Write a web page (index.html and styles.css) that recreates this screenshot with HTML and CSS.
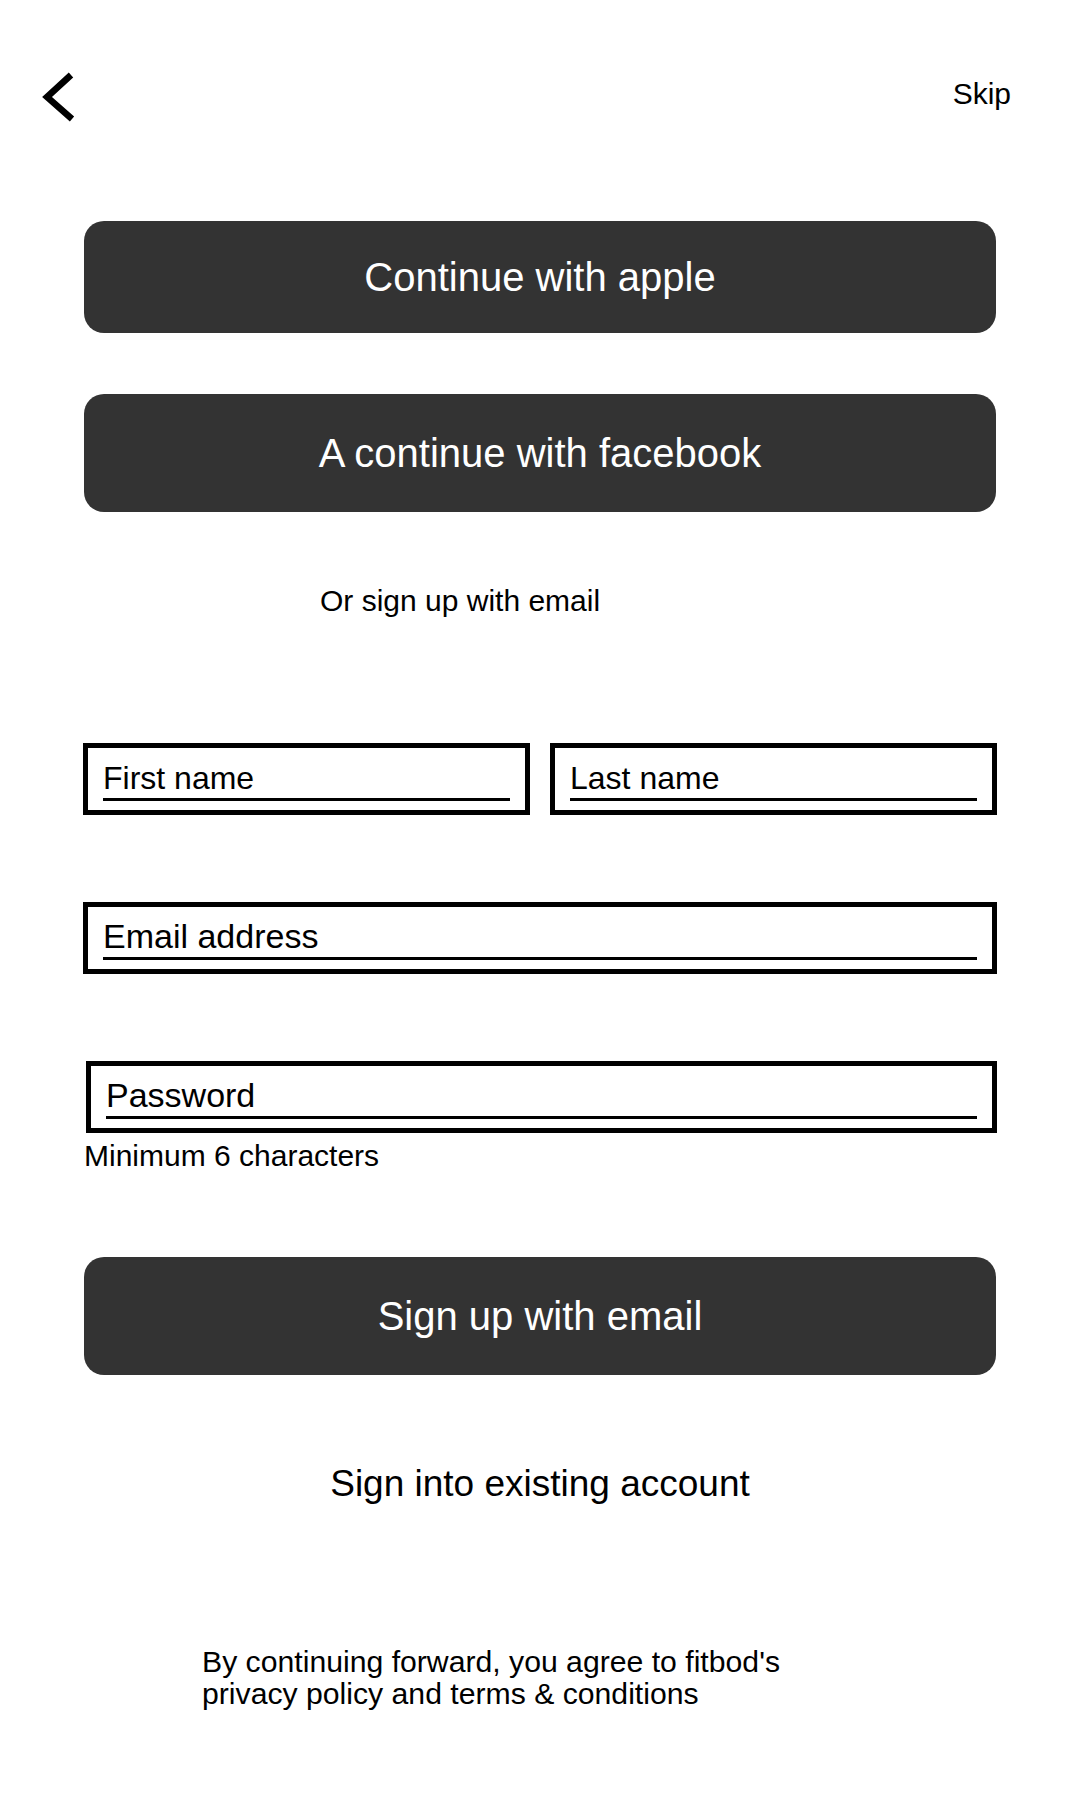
FILE: index.html
```html
<!DOCTYPE html>
<html lang="en">

<head>
    <meta charset="utf-8">
    <title>Sign up</title>
    <link rel="stylesheet" href="styles.css">
</head>

<body>
    <!-- 顶部 返回 + 跳过 -->
    <div class="topbar">
        <svg class="back" width="40" height="52" viewBox="0 0 40 52">
            <polyline points="31,3 7,25 32,47" fill="none" stroke="#000" stroke-width="6.5" stroke-linejoin="miter" stroke-linecap="butt" />
        </svg>
        <span class="skip">Skip</span>
    </div>

    <div class="main">
        <div class="btn btn-apple">Continue with apple</div>
        <div class="btn btn-fb">A continue with facebook</div>

        <p class="or">Or sign up with email</p>

        <!-- 表单 -->
        <div class="names">
            <div class="field"><input type="text" placeholder="First name"></div>
            <div class="field"><input type="text" placeholder="Last name"></div>
        </div>
        <div class="field field-big email"><input type="email" placeholder="Email address"></div>
        <div class="field field-big password"><input type="password" placeholder="Password"></div>
        <p class="hint">Minimum 6 characters</p>

        <div class="btn btn-signup">Sign up with email</div>

        <p class="signin">Sign into existing account</p>

        <p class="terms">By continuing forward, you agree to fitbod's<br>privacy policy and terms &amp; conditions</p>
    </div>
</body>

</html>
```

FILE: styles.css
```css
/* reset */

body,
p {
    margin: 0;
    padding: 0;
}

body {
    background: #fff;
    color: #000;
    font-family: "Liberation Sans", Arial, sans-serif;
}

/* 顶部 */

.topbar {
    display: flex;
    justify-content: space-between;
    align-items: flex-start;
    height: 50px;
    padding: 72px 69px 1px 40px;
}

.topbar .back {
    display: block;
}

.topbar .skip {
    margin-top: 5px;
    font-size: 30px;
    line-height: 34px;
}

/* 主体 宽914 */

.main {
    width: 914px;
    margin-left: 83px;
}

/* 深色按钮 */

.btn {
    display: flex;
    align-items: center;
    justify-content: center;
    margin: 0 1px;
    border-radius: 20px;
    background: #333;
    color: #fff;
    font-size: 40px;
    cursor: pointer;
}

.btn-apple {
    margin-top: 98px;
    height: 112px;
}

.btn-fb {
    margin-top: 61px;
    height: 118px;
}

.or {
    margin-top: 72px;
    padding-left: 237px;
    font-size: 30px;
    line-height: 34px;
}

/* 输入框 外框+下划线 */

.names {
    display: grid;
    grid-template-columns: 1fr 1fr;
    gap: 20px;
    margin-top: 125px;
}

.field {
    display: flex;
    align-items: flex-end;
    box-sizing: border-box;
    height: 72px;
    padding: 0 15px 9px;
    border: 5px solid #000;
}

.field input {
    width: 100%;
    height: 40px;
    padding: 0;
    border: 0;
    border-bottom: 3px solid #000;
    background: transparent;
    color: #000;
    font-family: inherit;
    font-size: 32px;
    outline: none;
}

.field input::placeholder {
    color: #000;
    opacity: 1;
}

.field-big {
    margin-top: 87px;
}

.field-big input {
    height: 42px;
    font-size: 34px;
}

.password {
    margin-left: 3px;
}

.hint {
    margin: 6px 0 0 1px;
    font-size: 30px;
    line-height: 34px;
}

.btn-signup {
    margin-top: 84px;
    height: 118px;
}

.signin {
    margin-top: 88px;
    text-align: center;
    font-size: 37px;
    line-height: 42px;
}

.terms {
    margin-top: 141px;
    padding-left: 119px;
    font-size: 30.2px;
    line-height: 32px;
}
```
